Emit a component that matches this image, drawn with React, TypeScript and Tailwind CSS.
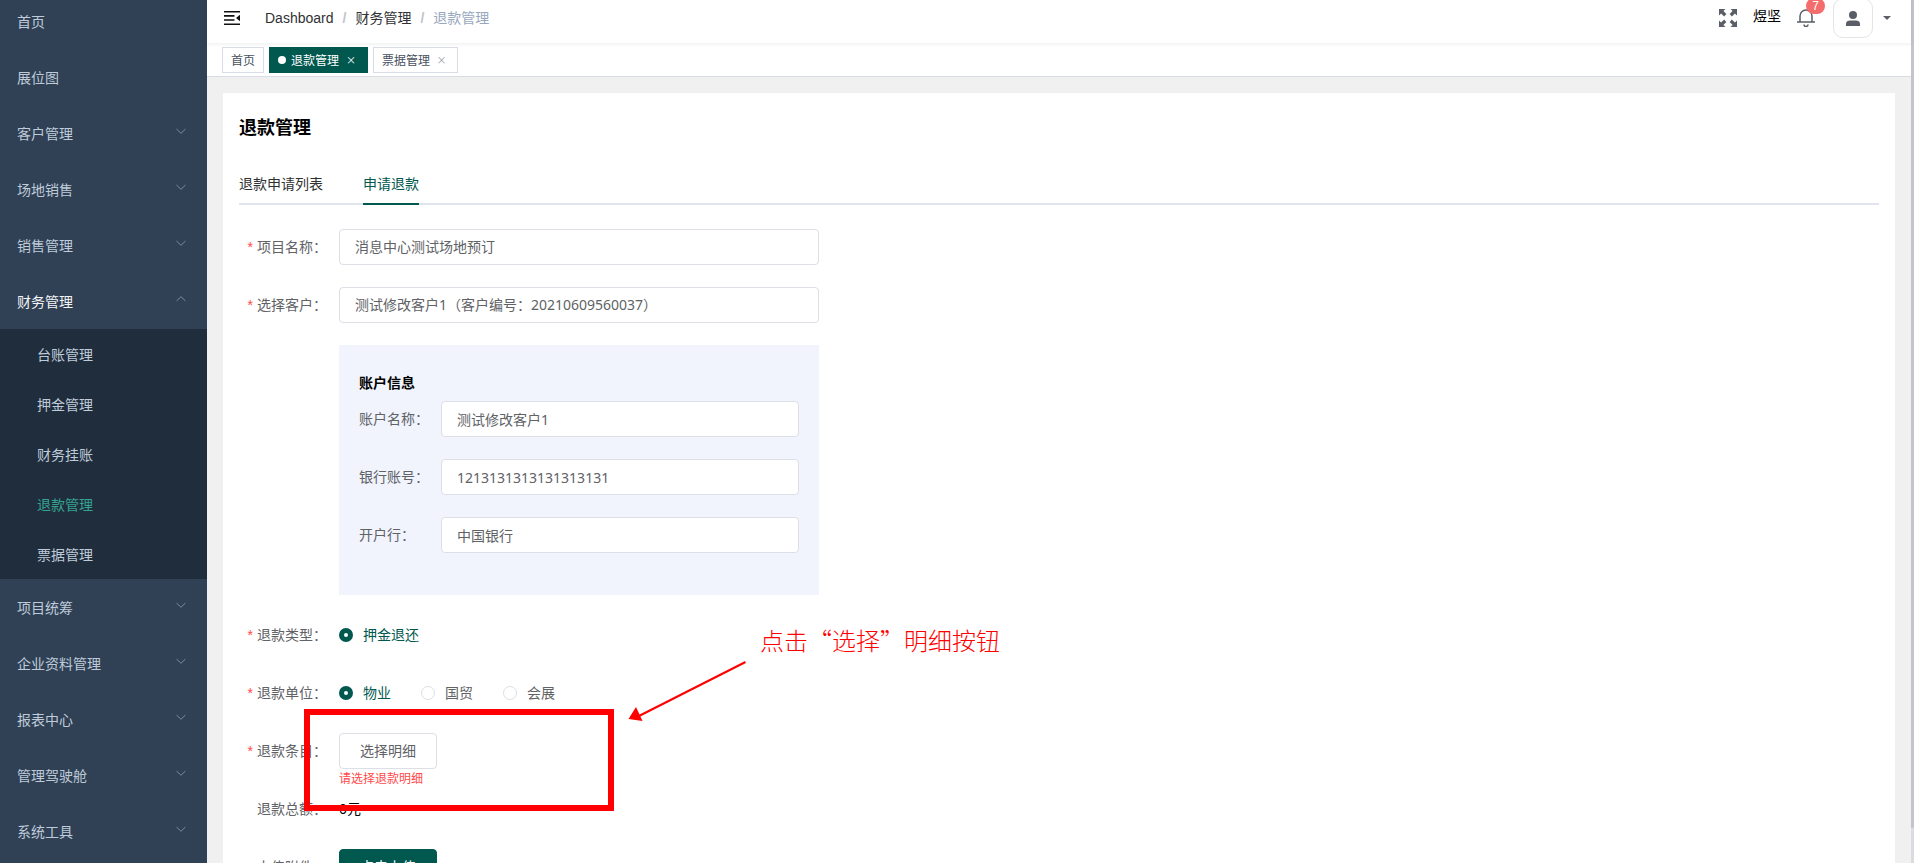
import { ReactNode, useState } from "react";

type MenuItem = { title: string; arrow?: boolean; children?: string[] };

const menu: MenuItem[] = [
  { title: "首页" },
  { title: "展位图" },
  { title: "客户管理", arrow: true },
  { title: "场地销售", arrow: true },
  { title: "销售管理", arrow: true },
  {
    title: "财务管理",
    arrow: true,
    children: ["台账管理", "押金管理", "财务挂账", "退款管理", "票据管理"],
  },
  { title: "项目统筹", arrow: true },
  { title: "企业资料管理", arrow: true },
  { title: "报表中心", arrow: true },
  { title: "管理驾驶舱", arrow: true },
  { title: "系统工具", arrow: true },
];

function Chevron({ up = false }: { up?: boolean }) {
  return (
    <svg
      viewBox="0 0 12 12"
      className={`mb-1 size-3 ${up ? "rotate-180" : ""}`}
      fill="none"
      stroke="#7d8998"
      strokeWidth="1"
    >
      <path d="M1.5 4 L6 8.3 L10.5 4" />
    </svg>
  );
}

function Sidebar() {
  return (
    <nav className="w-[207px] shrink-0 bg-[#304156] font-['Noto_Sans_CJK_SC',sans-serif] text-sm text-[#bfcbd9]">
      {menu.map((item) => (
        <div key={item.title}>
          <a
            href="#"
            className={`flex h-14 items-center justify-between pr-5 pl-[17px] ${
              item.children ? "text-[#f4f4f5]" : ""
            }`}
          >
            {item.title}
            {item.arrow && <Chevron up={!!item.children} />}
          </a>
          {item.children?.map((child) => (
            <a
              key={child}
              href="#"
              className={`flex h-[50px] items-center bg-[#1f2d3d] pl-[37px] ${
                child === "退款管理" ? "text-[#36a391]" : ""
              }`}
            >
              {child}
            </a>
          ))}
        </div>
      ))}
    </nav>
  );
}

function Header() {
  return (
    <header className="relative flex h-[50px] items-center justify-between bg-white pr-5 pl-[17px] text-sm shadow-[0_1px_4px_rgba(0,21,41,0.08)]">
      <div className="flex items-center">
        <button type="button" aria-label="收起菜单">
          <svg viewBox="0 0 16 14" className="h-3.5 w-4" fill="#111">
            <path d="M0 0h16v1.6H0zM0 4.1h10.5v1.6H0zM0 8.2h10.5v1.6H0zM0 12.4h16V14H0zM16 3.8v6.4L12 7z" />
          </svg>
        </button>
        <div className="ml-[25px] flex items-center text-[#303133]">
          <a href="#">Dashboard</a>
          <span className="mx-[9px] font-bold text-[#c0c4cc]">/</span>
          <a href="#">财务管理</a>
          <span className="mx-[9px] font-bold text-[#c0c4cc]">/</span>
          <span className="text-[#97a8be]">退款管理</span>
        </div>
      </div>

      <div className="flex items-center text-[#5a5e66]">
        <button type="button" aria-label="全屏">
          <svg viewBox="0 0 18 18" className="size-[18px]" fill="currentColor">
            <path d="M0 0h6.5L4.4 2.1l3 3-2.3 2.3-3-3L0 6.5zM18 0v6.5l-2.1-2.1-3 3-2.3-2.3 3-3L11.5 0zM0 18v-6.5l2.1 2.1 3-3 2.3 2.3-3 3L6.5 18zM18 18h-6.5l2.1-2.1-3-3 2.3-2.3 3 3 2.1-2.1z" />
          </svg>
        </button>
        <span className="ml-4 pb-1 text-black">煜坚</span>
        <button type="button" aria-label="消息" className="relative ml-4">
          <svg
            viewBox="0 0 18 18"
            className="size-[18px]"
            fill="none"
            stroke="currentColor"
            strokeWidth="1.5"
          >
            <path d="M3 12.500V7a6 6 0 0 1 12 0v5.500M0 13h18M7 15.500a2 2 0 0 0 4 0" />
          </svg>
          <span className="absolute -top-[11px] left-[9px] flex h-4 w-[19px] items-center justify-center rounded-full bg-[#f56c6c] text-xs text-white">
            7
          </span>
        </button>
        <button
          type="button"
          aria-label="用户"
          className="ml-[18px] flex size-10 items-center justify-center rounded-[10px] border border-[#e4e4e6]"
        >
          <svg viewBox="0 0 14 15" className="h-[15px] w-3.5" fill="currentColor">
            <circle cx="7" cy="4" r="4" />
            <path d="M0 15v-2.200C0 10.500 2 9.500 4 9.500h6c2 0 4 1 4 3.300V15z" />
          </svg>
        </button>
        <svg viewBox="0 0 8 4" className="ml-2.5 h-1 w-2" fill="currentColor">
          <path d="M0 0h8L4 4z" />
        </svg>
      </div>
    </header>
  );
}

function TagsView() {
  return (
    <div className="flex h-[34px] items-center gap-[5px] border-b border-[#d8dce5] bg-white px-[15px] font-['Noto_Sans_CJK_SC',sans-serif] text-xs text-[#495060]">
      <a href="#" className="flex h-[26px] items-center border border-[#d8dce5] px-2">
        首页
      </a>
      <a
        href="#"
        className="flex h-[26px] items-center border border-[#00584f] bg-[#00584f] px-2 text-white"
      >
        <span className="mr-[5px] size-2 rounded-full bg-white" />
        退款管理
        <span className="ml-1 w-4 text-center text-[10px]">×</span>
      </a>
      <a href="#" className="flex h-[26px] items-center border border-[#d8dce5] px-2">
        票据管理
        <span className="ml-1 w-[15px] text-center text-[10px] text-[#9a9ea6]">×</span>
      </a>
    </div>
  );
}

function Row({
  label,
  htmlFor,
  required = false,
  children,
}: {
  label: string;
  htmlFor?: string;
  required?: boolean;
  children: ReactNode;
}) {
  return (
    <div className="mb-[22px] flex">
      <label
        htmlFor={htmlFor}
        className="h-9 w-[100px] shrink-0 pr-3 text-right leading-9 whitespace-nowrap text-[#606266]"
      >
        {required && (
          <span className="mr-1 font-['Liberation_Sans',sans-serif] text-[#ff4949]">*</span>
        )}
        {label}：
      </label>
      <div className="relative min-h-9 flex-1 leading-9">{children}</div>
    </div>
  );
}

function TextInput({ id, value }: { id: string; value: string }) {
  return (
    <input
      id={id}
      defaultValue={value}
      className="block h-9 w-full rounded border border-[#dcdfe6] bg-white px-[15px] text-[#606266] outline-none"
    />
  );
}

function AccountField({ id, label, value }: { id: string; label: string; value: string }) {
  return (
    <div className="mb-[22px] flex">
      <label htmlFor={id} className="w-[82px] shrink-0 leading-9 text-[#606266]">
        {label}：
      </label>
      <TextInput id={id} value={value} />
    </div>
  );
}

function Radio({
  name,
  label,
  checked,
  onChange,
}: {
  name: string;
  label: string;
  checked: boolean;
  onChange: () => void;
}) {
  return (
    <label
      className={`flex items-center gap-2.5 ${checked ? "text-[#00584f]" : "text-[#606266]"}`}
    >
      <input
        type="radio"
        name={name}
        checked={checked}
        onChange={onChange}
        className="size-3.5 appearance-none rounded-full border border-[#dcdfe6] bg-white checked:border-[5px] checked:border-[#00584f]"
      />
      {label}
    </label>
  );
}

function RefundForm() {
  const [unit, setUnit] = useState("物业");

  return (
    <form className="mt-6 max-w-[580px]">
      <Row label="项目名称" htmlFor="project" required>
        <TextInput id="project" value="消息中心测试场地预订" />
      </Row>
      <Row label="选择客户" htmlFor="customer" required>
        <TextInput id="customer" value="测试修改客户1（客户编号：20210609560037）" />
      </Row>

      <div className="mb-[22px] ml-[100px] bg-[#f1f4fd] p-5">
        <h3 className="leading-9 font-bold text-black">账户信息</h3>
        <AccountField id="account" label="账户名称" value="测试修改客户1" />
        <AccountField id="bankNo" label="银行账号" value="1213131313131313131" />
        <AccountField id="bank" label="开户行" value="中国银行" />
      </div>

      <Row label="退款类型" required>
        <div className="flex">
          <Radio name="type" label="押金退还" checked onChange={() => {}} />
        </div>
      </Row>
      <Row label="退款单位" required>
        <div className="flex gap-[30px]">
          {["物业", "国贸", "会展"].map((u) => (
            <Radio
              key={u}
              name="unit"
              label={u}
              checked={unit === u}
              onChange={() => setUnit(u)}
            />
          ))}
        </div>
      </Row>
      <Row label="退款条目" htmlFor="pick" required>
        <button
          id="pick"
          type="button"
          className="block h-9 rounded border border-[#dcdfe6] bg-white px-5 leading-none text-[#606266]"
        >
          选择明细
        </button>
        <p className="absolute top-full left-0 pt-0.5 text-xs text-[#ff4949]">请选择退款明细</p>
        <Annotation />
      </Row>
      <Row label="退款总额">
        <span className="text-black">0元</span>
      </Row>
      <Row label="上传附件" htmlFor="upload">
        <button
          id="upload"
          type="button"
          className="block h-9 rounded border border-[#00584f] bg-[#00584f] px-5 leading-none text-white"
        >
          点击上传
        </button>
      </Row>
    </form>
  );
}

// red frame, arrow and hint drawn over the detail row
function Annotation() {
  return (
    <div className="pointer-events-none absolute -top-6 -left-[35px] z-10 h-[102px] w-[310px] border-6 border-[#ff0000]">
      <svg
        viewBox="0 0 120 62"
        className="absolute -top-[54px] left-[318px] h-[62px] w-[120px]"
        fill="#f00"
      >
        <path d="M9 56 L117.500 1" stroke="#f00" strokeWidth="2" />
        <path d="M0.500 58 L8 46 L14.500 60z" />
      </svg>
      <p className="absolute -top-[91px] left-[450px] font-['Noto_Sans_CJK_SC',sans-serif] text-2xl font-light whitespace-nowrap text-[#ff0000]">
        点击“选择”明细按钮
      </p>
    </div>
  );
}

export default function App() {
  return (
    <div className="flex h-screen overflow-hidden bg-[#f0f0f0] font-['Liberation_Sans','Noto_Sans_CJK_SC',sans-serif]">
      <div className="-mt-[7px] flex flex-1 self-start">
        <Sidebar />
        <div className="min-w-0 flex-1">
          <Header />
          <TagsView />
          <main className="m-4 bg-white p-4 font-['Noto_Sans','Noto_Sans_CJK_SC',sans-serif] text-sm">
            <h2 className="text-lg leading-9 font-bold text-black">退款管理</h2>
            <div className="mt-[18px] flex gap-10 border-b-2 border-[#dfe4ed] leading-10">
              <button
                type="button"
                className="-mb-0.5 border-b-2 border-transparent pt-0.5 leading-[38px] text-[#303133]"
              >
                退款申请列表
              </button>
              <button
                type="button"
                className="-mb-0.5 border-b-2 border-[#00584f] pt-0.5 leading-[38px] text-[#00584f]"
              >
                申请退款
              </button>
            </div>
            <RefundForm />
          </main>
        </div>
      </div>
      {/* page scrollbar */}
      <div className="w-[3px] shrink-0 bg-[#dcdce0]">
        <div className="h-[96%] rounded-b-full bg-[#c4c4ca]" />
      </div>
    </div>
  );
}
